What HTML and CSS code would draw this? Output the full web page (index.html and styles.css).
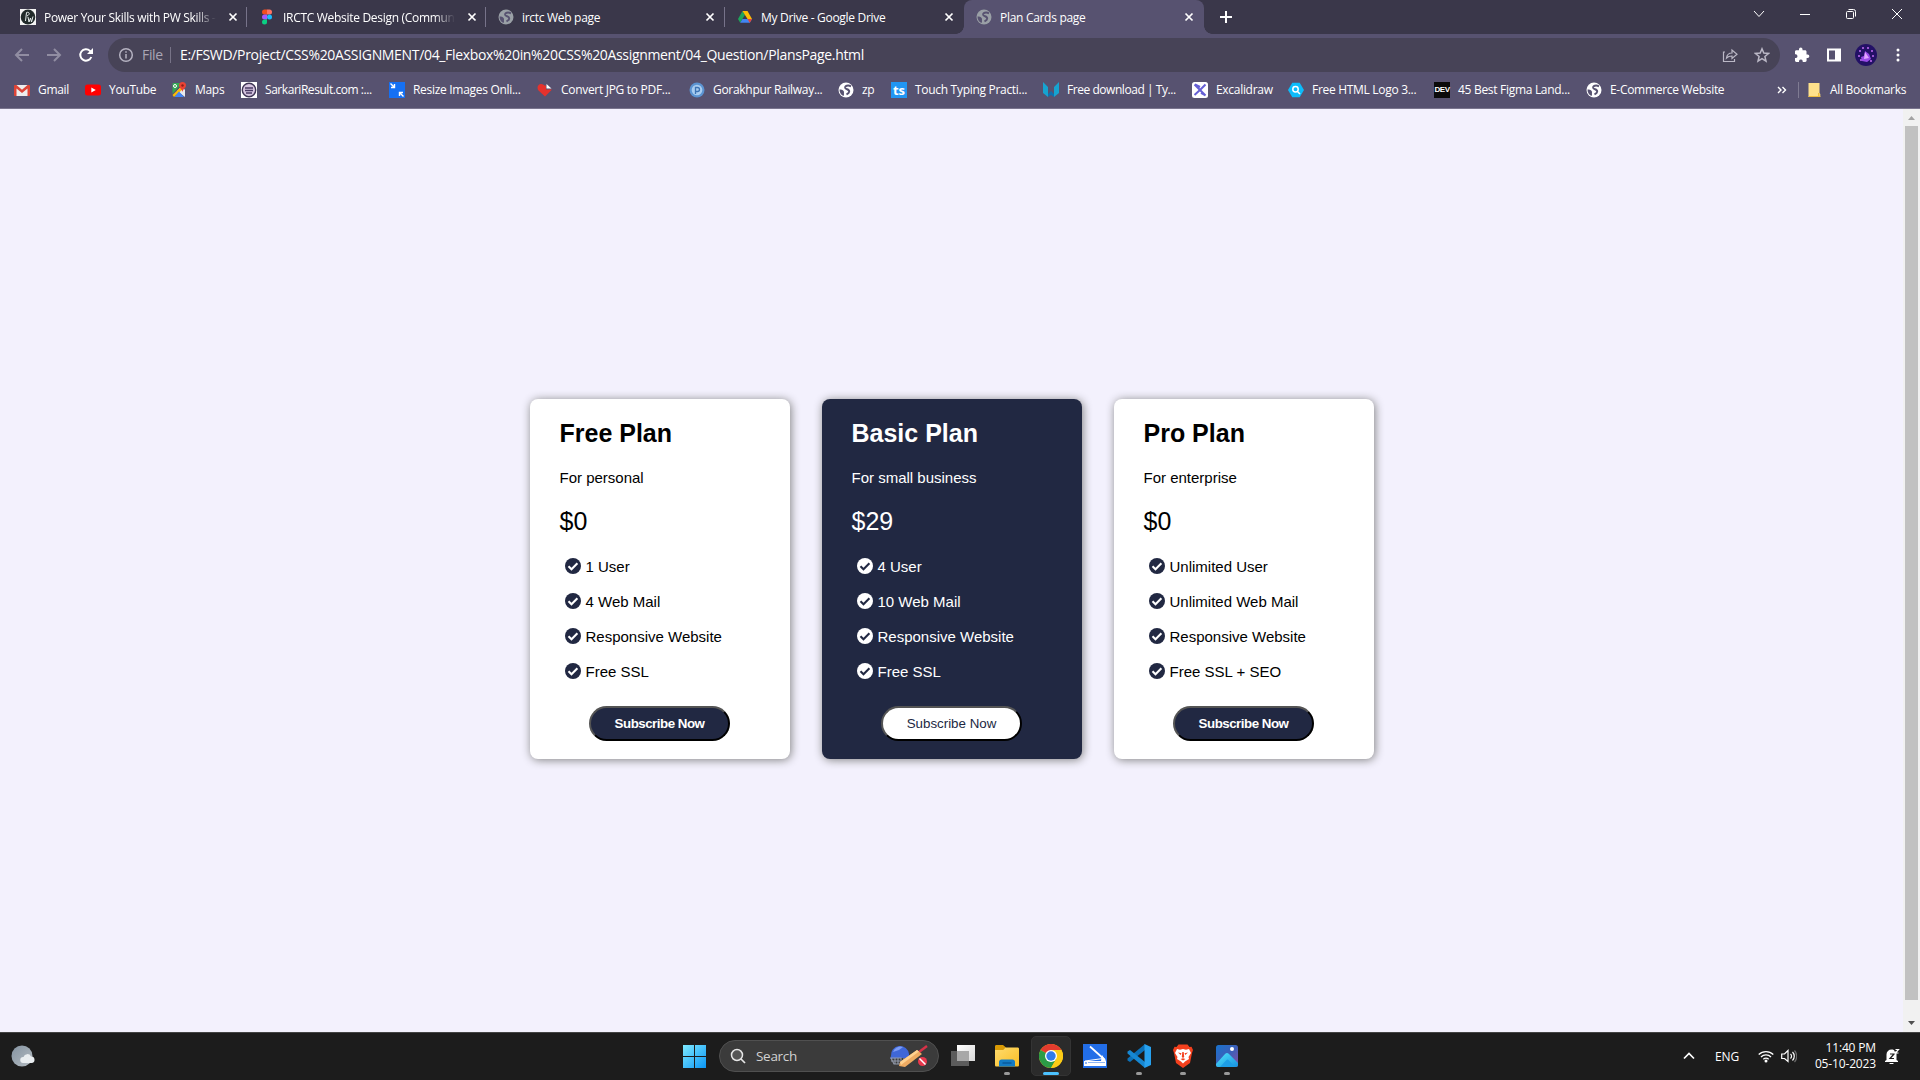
FILE: index.html
```html
<!DOCTYPE html>
<html lang="en">
<head>
<meta charset="utf-8">
<title>Plan Cards page</title>
<link rel="stylesheet" href="styles.css">
</head>
<body>
<svg width="0" height="0" class="defs">
  <symbol id="close" viewBox="0 0 16 16"><path d="M4.5 4.5l7 7M11.5 4.5l-7 7" stroke="#fff" stroke-width="1.7"/></symbol>
  <symbol id="globe" viewBox="0 0 16 16"><circle cx="8" cy="8" r="7.500" fill="currentColor"/><path d="M1.500 7.500C4 7 6.500 8.500 6 10.500c-.3 1.500.5 2-.5 3.500C3 13 1.500 10.500 1.500 7.500z" fill="#575270"/><path d="M13 4.300C10 2.800 6.500 3.800 7.200 6c.6 1.600 4.300 1 4 3.600-.2 1.700-1.700 2.400-2.700 2.900" fill="none" stroke="#575270" stroke-width="1.900"/></symbol>
  <symbol id="check" viewBox="0 0 16 16"><circle cx="8" cy="8" r="8" fill="currentColor"/><path d="M3.500 8.200l3 3 5.900-5.900" fill="none" stroke="var(--tick)" stroke-width="2.100"/></symbol>
</svg>

<header class="browser">
  <div class="tabstrip">
    <div class="tab">
      <svg class="ic" viewBox="0 0 16 16"><rect width="16" height="16" fill="#f4f4f4"/><ellipse cx="8" cy="8" rx="7.300" ry="7.600" fill="#222b2b"/><path d="M5.500 12L6.500 3.500c3-1 4 2 .5 3.500M8 8l1 5 1.500-4 1 4L13 7.500" fill="none" stroke="#e8eeee" stroke-width="1"/></svg>
      <span class="title fade">Power Your Skills with PW Skills -</span><svg class="ic"><use href="#close"/></svg>
    </div>
    <div class="tab">
      <svg class="ic" viewBox="0 0 16 16"><path d="M8 .5H5.500a2.500 2.500 0 000 5H8z" fill="#f24e1e"/><path d="M8 .5h2.500a2.500 2.500 0 010 5H8z" fill="#ff7262"/><path d="M8 5.500H5.500a2.500 2.500 0 000 5H8z" fill="#a259ff"/><circle cx="10.500" cy="8" r="2.500" fill="#1abcfe"/><path d="M8 10.500H5.500A2.500 2.500 0 108 13z" fill="#0acf83"/></svg>
      <span class="title fade">IRCTC Website Design (Commun</span><svg class="ic"><use href="#close"/></svg>
    </div>
    <div class="tab">
      <svg class="ic gray"><use href="#globe"/></svg>
      <span class="title">irctc Web page</span><svg class="ic"><use href="#close"/></svg>
    </div>
    <div class="tab last">
      <svg class="ic" viewBox="0 0 16 16"><path d="M5.500 2L1 10l2.200 3.800L8 5.800z" fill="#1ea55b"/><path d="M5.500 2h5L15 10h-4.500z" fill="#fbbc04"/><path d="M3.200 13.800L5.500 10H15l-2.200 3.800z" fill="#4285f4"/><path d="M12.800 13.800L10.500 10H15z" fill="#ea4335"/></svg>
      <span class="title">My Drive - Google Drive</span><svg class="ic"><use href="#close"/></svg>
    </div>
    <div class="tab active">
      <svg class="ic gray"><use href="#globe"/></svg>
      <span class="title">Plan Cards page</span><svg class="ic"><use href="#close"/></svg>
    </div>
    <svg class="plus" viewBox="0 0 16 16"><path d="M8 2v12M2 8h12" stroke="#fff" stroke-width="2"/></svg>
    <div class="winctl">
      <svg viewBox="0 0 12 12"><path d="M1 3l5 5.500L11 3"/></svg>
      <svg viewBox="0 0 12 12"><path d="M1 6.500h10"/></svg>
      <svg viewBox="0 0 12 12"><rect x="1.500" y="3.500" width="7" height="7" rx="1"/><path d="M3.500 1.500h5a2 2 0 012 2v5"/></svg>
      <svg viewBox="0 0 12 12"><path d="M1 1l10 10M11 1L1 11"/></svg>
    </div>
  </div>

  <div class="toolbar">
    <svg class="nav dim" viewBox="0 0 16 16"><path d="M15 8H2M8 2L2 8l6 6"/></svg>
    <svg class="nav dim" viewBox="0 0 16 16"><path d="M1 8h13M8 2l6 6-6 6"/></svg>
    <svg class="nav" viewBox="0 0 16 16"><path d="M13.300 10A5.700 5.700 0 1112 3.900L14 6"/><path d="M15 1v6H9z" fill="#fff" stroke="none"/></svg>
    <div class="omnibox">
      <svg class="info" viewBox="0 0 16 16"><circle cx="8" cy="8" r="6.300"/><path d="M8 7v4.500M8 4.200v1.600"/></svg>
      <span class="scheme">File</span>
      <span class="url">E:/FSWD/Project/CSS%20ASSIGNMENT/04_Flexbox%20in%20CSS%20Assignment/04_Question/PlansPage.html</span>
      <svg class="act" viewBox="0 0 16 16"><path d="M3 5H1.500v9.500h11V12M4.500 11C5 7.500 7 6 10 6V3l5 4.300-5 4.200V9C7.500 9 6 9.500 4.500 11z"/></svg>
      <svg class="act" viewBox="0 0 16 16"><path stroke-width="1.500" d="M8 1.800l1.800 4.300 4.700.4-3.600 3 1.100 4.600L8 11.700l-4 2.400 1.100-4.600-3.600-3 4.700-.4z"/></svg>
    </div>
    <svg class="tool" viewBox="0 0 16 16"><path fill="#fff" d="M13.500 7.500h-1V4.700c0-.8-.6-1.400-1.400-1.400H8.500v-1a1.700 1.700 0 00-3.500 0v1H2.400C1.600 3.300 1 3.900 1 4.700v2.600h1a1.900 1.900 0 010 3.700H1v2.600c0 .8.600 1.400 1.400 1.400H5v-1a1.900 1.900 0 013.700 0v1h2.500c.8 0 1.400-.6 1.400-1.400v-2.600h1a1.700 1.700 0 000-3.500z"/></svg>
    <svg class="tool" viewBox="0 0 16 16"><path fill="#fff" fill-rule="evenodd" d="M1 1.500h14v13H1zM3 3.500v9h6v-9z"/></svg>
    <svg class="avatar" viewBox="0 0 22 22"><circle cx="11" cy="11" r="11" fill="#231166"/><g fill="#c56cf5"><circle cx="5" cy="7" r="1"/><circle cx="8" cy="4" r="1"/><circle cx="13" cy="4" r="1"/><circle cx="17" cy="7" r="1"/><circle cx="4" cy="12" r="1"/><circle cx="18" cy="12" r="1"/><circle cx="6" cy="16" r="1"/><circle cx="16" cy="17" r="1"/></g><path d="M10 7l4 3 2 5-4 3-5-1-1-4 3-1z" fill="#9a4be8"/><path d="M10 8l4 6-5 1z" fill="#e3a5ff"/></svg>
    <svg class="tool" viewBox="0 0 16 16"><g fill="#fff"><circle cx="8" cy="3" r="1.500"/><circle cx="8" cy="8" r="1.500"/><circle cx="8" cy="13" r="1.500"/></g></svg>
  </div>

  <nav class="bookmarks">
    <a><svg class="ic" viewBox="0 0 16 16"><path fill="#eee" d="M1 3h14v11H1z"/><path fill="#de4437" d="M1 3h1.500L8 7.800 13.500 3H15c.5 0 1 .5 1 1v9c0 .6-.4 1-1 1h-1.500V6.500L8 11 2.500 6.500V14H1c-.6 0-1-.4-1-1V4c0-.5.500-1 1-1z"/></svg>Gmail</a>
    <a><svg class="ic" viewBox="0 0 16 16"><rect y="2.500" width="16" height="11" rx="2.500" fill="#f00"/><path d="M6.300 5.500L10.800 8l-4.500 2.500z" fill="#fff"/></svg>YouTube</a>
    <a><svg class="ic" viewBox="0 0 16 16"><path fill="#34a853" d="M2 1h9L1.500 12V2z"/><path fill="#e8eaed" d="M11 4l3 4v7L6 9z"/><path fill="#fbbc04" d="M1.500 13L11 4l1 3-9 8z"/><path fill="#4285f4" d="M3.500 15L8 9.500 13 15z"/><path fill="#ea4335" d="M11.500 0A3.500 3.500 0 008 3.500C8 6 11 7 11.500 10 12 7 15 6 15 3.500A3.500 3.500 0 0011.500 0z"/><circle cx="11.500" cy="3.500" r="1.200" fill="#8b1f17"/><circle cx="4" cy="4" r="1.500" fill="none" stroke="#fff"/></svg>Maps</a>
    <a class="tight"><svg class="ic" viewBox="0 0 16 16"><path fill="#fff" d="M0 0h16v16H0z"/><circle cx="8" cy="8" r="6.700" fill="#d5c4df" stroke="#3f3655" stroke-width="1.400"/><path d="M4 6h8M4 8.500h8M5 11h6" stroke="#493a64" stroke-width="1.300"/></svg>SarkariResult.com :...</a>
    <a><svg class="ic" viewBox="0 0 16 16"><path fill="#1570f3" d="M0 0h16v16H0z"/><path d="M1.500 1.500l4 4M5.500 2v3.500H2M14.500 14.500l-4-4M14 10.500h-3.500V14" fill="none" stroke="#fff" stroke-width="1.400"/></svg>Resize Images Onli...</a>
    <a><svg class="ic" viewBox="0 0 16 16"><path fill="#e5322d" d="M8 14.500L1.500 8.500C-.5 6 .8 2 4 2c2 0 3.300 1 4 2l1-1v4.500h6z"/><path fill="#fff" d="M9.500 2l5 4.500h-5z"/></svg>Convert JPG to PDF...</a>
    <a><svg class="ic" viewBox="0 0 16 16"><circle cx="8" cy="8" r="7.500" fill="#5b94d2"/><circle cx="8" cy="8" r="5.300" fill="#a9cdf0"/><path d="M6.500 12V5.500h2a2 2 0 010 4h-2" fill="none" stroke="#3d74b4" stroke-width="1.300"/></svg>Gorakhpur Railway...</a>
    <a><svg class="ic white"><use href="#globe"/></svg>zp</a>
    <a><span class="ic badge ts">ts</span>Touch Typing Practi...</a>
    <a class="tight"><svg class="ic" viewBox="0 0 16 16"><path fill="#16a3d0" d="M0 0l5 5v10L0 11zM16 0l-5 5v10l5-4z"/><path fill="#0f6fae" d="M5 12l3-3 3 3v3l-3-2-3 2z"/></svg>Free download | Ty...</a>
    <a><svg class="ic" viewBox="0 0 16 16"><rect width="16" height="16" rx="2.500" fill="#fff"/><path d="M2.500 2.500l11 11M13.500 2.500l-5 5-6 5.500M3 2.500L8 5M9 11l4.500 2.500" fill="none" stroke="#655fd5" stroke-width="2"/></svg>Excalidraw</a>
    <a><svg class="ic" viewBox="0 0 16 16"><path fill="#0cbcfb" d="M4.300.7h7.400L16 8l-4.300 7.300H4.300L0 8z"/><circle cx="7.500" cy="7.300" r="2.700" fill="none" stroke="#fff" stroke-width="1.500"/><path d="M9.500 9.500l2.500 2.500" stroke="#fff" stroke-width="1.500"/></svg>Free HTML Logo 3...</a>
    <a><span class="ic badge dev">DEV</span>45 Best Figma Land...</a>
    <a><svg class="ic white"><use href="#globe"/></svg>E-Commerce Website</a>
    <svg class="more" viewBox="0 0 10 10"><path d="M1 2l3 3-3 3M5.500 2l3 3-3 3" fill="none" stroke="#fff" stroke-width="1.400"/></svg>
    <a class="all"><svg class="ic" viewBox="0 0 16 16"><path fill="#ffe18b" d="M2.500 1h11v10l.8 1v3H2.500z"/><path fill="#efbd3f" d="M2.500 14h11.800v1H2.500zM12 11h1.500v3H12z"/></svg>All Bookmarks</a>
  </nav>
</header>

<div class="viewport">
  <main class="plans">
    <section class="card">
      <h1>Free Plan</h1>
      <p class="for">For personal</p>
      <p class="price">$0</p>
      <ul>
        <li><svg><use href="#check"/></svg>1 User</li>
        <li><svg><use href="#check"/></svg>4 Web Mail</li>
        <li><svg><use href="#check"/></svg>Responsive Website</li>
        <li><svg><use href="#check"/></svg>Free SSL</li>
      </ul>
      <button>Subscribe Now</button>
    </section>
    <section class="card basic">
      <h1>Basic Plan</h1>
      <p class="for">For small business</p>
      <p class="price">$29</p>
      <ul>
        <li><svg><use href="#check"/></svg>4 User</li>
        <li><svg><use href="#check"/></svg>10 Web Mail</li>
        <li><svg><use href="#check"/></svg>Responsive Website</li>
        <li><svg><use href="#check"/></svg>Free SSL</li>
      </ul>
      <button>Subscribe Now</button>
    </section>
    <section class="card">
      <h1>Pro Plan</h1>
      <p class="for">For enterprise</p>
      <p class="price">$0</p>
      <ul>
        <li><svg><use href="#check"/></svg>Unlimited User</li>
        <li><svg><use href="#check"/></svg>Unlimited Web Mail</li>
        <li><svg><use href="#check"/></svg>Responsive Website</li>
        <li><svg><use href="#check"/></svg>Free SSL + SEO</li>
      </ul>
      <button>Subscribe Now</button>
    </section>
  </main>
  <div class="scrollbar">
    <svg viewBox="0 0 17 17"><path d="M5 11h7L8.500 7z" fill="#a3a3a3"/></svg>
    <div class="thumb"></div>
    <svg viewBox="0 0 17 17"><path d="M5 6h7l-3.500 4z" fill="#505050"/></svg>
  </div>
</div>

<footer class="taskbar">
  <svg class="weather" viewBox="0 0 24 24"><defs><linearGradient id="moon" x2="1" y2="1"><stop stop-color="#8594a2"/><stop offset="1" stop-color="#b4bbc1"/></linearGradient></defs><circle cx="11" cy="12" r="10.500" fill="url(#moon)"/><path d="M12 19a3 3 0 01.5-6 4 4 0 017.500-.5 3.200 3.200 0 01.5 6.500z" fill="#e9edf0"/></svg>
  <div class="apps">
    <div class="slot start"><svg viewBox="0 0 23 23"><defs><linearGradient id="win" gradientUnits="userSpaceOnUse" x2="23" y2="23"><stop stop-color="#7eeaff"/><stop offset="1" stop-color="#0a95f5"/></linearGradient></defs><path fill="url(#win)" d="M0 0h11v11H0zM12 0h11v11H12zM0 12h11v11H0zM12 12h11v11H12z"/></svg></div>
    <div class="search">
      <svg class="lens" viewBox="0 0 16 16"><circle cx="7" cy="7" r="5.500" fill="#555" stroke="#e6e6e6" stroke-width="1.500"/><path d="M11 11l4 4" stroke="#e6e6e6" stroke-width="1.700"/></svg>
      <span>Search</span>
      <svg class="cricket" viewBox="0 0 40 24"><path d="M2 12a9 9 0 0118-2v4H8l-7 1z" fill="#3f67d8"/><path d="M4 8a8 8 0 0110-5l-4 3z" fill="#7c9cf5"/><path d="M2 14h10v6H5zM2 17h9M6 14v6M9 14v6M15 14v6" fill="none" stroke="#929aaa" stroke-width="1.100"/><path d="M30 8l8-6" stroke="#d83248" stroke-width="2.400"/><path d="M28 6l5 4-17 13-6-1 1-4z" fill="#efab62"/><path d="M28 6l2 1.500L12 21l-1-3z" fill="#ffd18f"/><circle cx="33.500" cy="17.500" r="4.500" fill="#e8384d"/><path d="M30.500 14.500l6 6" stroke="#fff" stroke-width="1.500"/></svg>
    </div>
    <div class="slot"><svg viewBox="0 0 24 24"><defs><linearGradient id="tv" x2="1" y2="1"><stop stop-color="#fff"/><stop offset="1" stop-color="#d8d8d8"/></linearGradient></defs><path fill="#5c5c5c" d="M0 7h18v15H0z"/><path fill="url(#tv)" d="M6 1h18v16H6z"/><path fill="#a8a8a8" d="M6 7h12v10H6z"/></svg></div>
    <div class="slot"><svg viewBox="0 0 24 24"><defs><linearGradient id="fold" x2="1" y2="1"><stop stop-color="#ffdc6e"/><stop offset="1" stop-color="#f9bd24"/></linearGradient></defs><path fill="#d99a05" d="M0 2.500C0 1.500.5 1 1.500 1H8l3 2.500-3 3H0z"/><path fill="url(#fold)" d="M0 6h8l2.500-2.500h12c1 0 1.500.5 1.500 1.500v16c0 1-.5 1.500-1.500 1.500h-21C.5 22.500 0 22 0 21z"/><path fill="#137bc4" d="M4 22.500V18c0-1.500 1-2.500 2.500-2.500h11c1.500 0 2.500 1 2.500 2.500v4.500z"/><path d="M7.500 19h9" stroke="#0a5a9c" stroke-width="1.500"/></svg><i></i></div>
    <div class="slot current"><svg viewBox="0 0 24 24"><circle cx="12" cy="12" r="12" fill="#fdcc16"/><path fill="#e33b2e" d="M12 12L1.600 6A12 12 0 0122.400 6z"/><path fill="#2c9c46" d="M12 12L1.600 6A12 12 0 0012 24l5.200-9z"/><path fill="#fdcc16" d="M12 6h10.400A12 12 0 0112 24l5.200-9z"/><circle cx="12" cy="12" r="6" fill="#fff"/><circle cx="12" cy="12" r="4.700" fill="#317be9"/></svg><i></i></div>
    <div class="slot"><svg viewBox="0 0 24 24"><path fill="#226ee8" d="M0 0h24v24H0z"/><path fill="#fff" d="M1 17h22v5H1z"/><path d="M7 2.500L22 16" stroke="#fff" stroke-width="1.700"/><path d="M2 17L20 14.500" stroke="#fff" stroke-width="1"/><path fill="#fff" d="M19 11l4 6h-5z"/><path fill="#226ee8" d="M2 18.500h2v1H2zM5 18.500h17v.6H5z"/></svg></div>
    <div class="slot"><svg viewBox="0 0 24 24"><path fill="#0b70b8" d="M18 0v6L3 18 .5 16.500v-2z"/><path fill="#1687d2" d="M18 24v-6L3 6 .5 7.500v2z"/><path fill="#27a1ef" d="M17.500 0L24 3v18l-6.500 3z"/></svg><i></i></div>
    <div class="slot"><svg viewBox="0 0 24 24"><path fill="#f4401d" d="M7.500.5h9L18.500 3l2-.3L22 6l-1 3-2 10-7 5-7-5L3 9 2 6l1.500-3.300 2 .3z"/><path fill="#fff" d="M6 5l3 .7L12 5l3 .7L18 5l2 4-2.500 4 .5 2-4 2.500-2 2-2-2L6 15l.5-2L4 9z"/><path fill="#f4401d" d="M7 8.500l3.500.7-.8 1.800zM17 8.500l-3.500.7.8 1.800zM11.300 8h1.400l.5 5-1.200 1-1.200-1zM9.500 15l2.500-.8 2.500.8-2.500 1.500z"/></svg><i></i></div>
    <div class="slot"><svg viewBox="0 0 24 24"><defs><linearGradient id="ph" x2="1" y2="1"><stop stop-color="#1873cd"/><stop offset=".5" stop-color="#3c5fb8"/><stop offset="1" stop-color="#8a4ea3"/></linearGradient><linearGradient id="hill" x2="1" y2="1"><stop stop-color="#52e5fb"/><stop offset="1" stop-color="#168fe0"/></linearGradient></defs><rect x="1" y="1" width="22" height="22" rx="2.500" fill="url(#ph)"/><path fill="url(#hill)" d="M1 20L10 10q2-1.800 4 0l9 9v2q0 2-2 2H3q-2 0-2-2z"/><path d="M5 23l6.500-7q1-1 2 0l6.500 7z" fill="#1d9de5"/><circle cx="17" cy="5" r="2" fill="#fff"/></svg><i></i></div>
  </div>
  <div class="tray">
    <svg viewBox="0 0 16 16"><path d="M3 10.500l5-5 5 5" stroke-width="1.700"/></svg>
    <span class="lang">ENG</span>
    <svg viewBox="0 0 16 16"><path d="M.7 6.500a10.500 10.500 0 0114.600 0M3 9a7 7 0 0110 0M5.300 11.300a4 4 0 015.400 0" stroke-width="1.300"/><circle cx="8" cy="13" r="1.500" fill="#fff" stroke="none"/></svg>
    <svg viewBox="0 0 16 16"><path d="M.7 6h2.800L7 2.500v11L3.500 10.500H.7zM9.500 6a3 3 0 010 4.500M11.500 4a6 6 0 010 8.500"/><path d="M13.500 2.500a8.500 8.500 0 010 11.500" opacity=".35"/></svg>
    <div class="clock"><span>11:40 PM</span><span>05-10-2023</span></div>
    <svg class="bell" viewBox="0 0 16 16"><path fill="#fff" stroke="none" d="M2.500 6.500A5 5 0 017.500 1.500c2 0 3 .5 3 2h2V12L14 13v1H1v-1l1.500-1zM5.500 15h4a2 2 0 01-4 0z"/><path d="M6 6h4l-4 4.500h4" stroke="#1d1d1d"/><path d="M11.500 1.500h3l-3 3.500h3"/></svg>
  </div>
</footer>
</body>
</html>
```

FILE: styles.css
```css
* { box-sizing: border-box; }
body {
  margin: 0;
  width: 1920px;
  height: 1080px;
  overflow: hidden;
  display: flex;
  flex-direction: column;
  font-family: "Open Sans", "Noto Sans", sans-serif;
  font-size: 12px;
  letter-spacing: -0.3px;
  color: #fff;
}
.defs { position: absolute; }
svg { display: block; flex: none; }
.ic { width: 16px; height: 16px; flex: none; }
.gray { color: #9aa0a6; }
.white { color: #fff; }

/* Browser chrome */
.browser { height: 109px; background: #575270; border-bottom: 1px solid #7a758e; flex: none; }
.tabstrip { height: 34px; background: #3a374a; display: flex; align-items: center; padding-left: 8px; }
.tab { width: 239px; height: 34px; padding: 0 15px 0 12px; display: flex; align-items: center; position: relative; }
.tab .title { flex: 1; margin: 0 9px 0 8px; white-space: nowrap; }
.tab .ic:last-child { margin-right: -8px; }
.tab:not(.last):not(.active)::after { content: ""; position: absolute; right: 0; top: 7px; width: 1px; height: 20px; background: #77738a; }
.fade { -webkit-mask-image: linear-gradient(90deg, #000 88%, transparent); mask-image: linear-gradient(90deg, #000 88%, transparent); }
.active { background: #575270; border-radius: 8px 8px 0 0; width: 240px; }
.active::before, .active::after { content: ""; position: absolute; bottom: 0; width: 8px; height: 8px; }
.active::before { left: -8px; background: radial-gradient(circle at 0 0, transparent 7.5px, #575270 8px); }
.tab.active::after { right: -8px; background: radial-gradient(circle at 100% 0, transparent 7.5px, #575270 8px); }
.active .title { margin-right: 10px; }
.plus { width: 16px; height: 16px; margin-left: 14px; }
.winctl { margin: 0 17px 6px auto; display: flex; gap: 34px; }
.winctl svg { width: 12px; height: 12px; fill: none; stroke: #fff; }

.toolbar { height: 42px; padding: 0 14px; display: flex; align-items: center; gap: 16px; }
.nav { width: 16px; height: 16px; fill: none; stroke: #fff; stroke-width: 2; }
.dim { stroke: #918da2; }
.omnibox { width: 1672px; height: 34px; margin-left: -2px; padding: 0 10px; border-radius: 17px; background: #474357; display: flex; align-items: center; font-size: 14px; letter-spacing: -0.33px; }
.info { width: 16px; height: 16px; fill: none; stroke: #b5b2c1; stroke-width: 1.5; }
.scheme { color: #aaa7b5; margin-left: 8px; width: 29px; border-right: 1px solid #777387; line-height: 16px; }
.url { margin-left: 9px; flex: 1; white-space: nowrap; line-height: 16px; }
.act { width: 16px; height: 16px; margin-left: 16px; fill: none; stroke: #bbb8c6; stroke-width: 1.2; }
.omnibox + .tool { margin-left: -2px; }
.tool { width: 16px; height: 16px; }
.avatar { width: 22px; height: 22px; margin: 0 -3px; }

.bookmarks {
  height: 28px;
  padding-left: 14px;
  display: grid;
  grid-template-columns: 71px 86px 70px 148px 148px 152px 149px 53px 152px 149px 96px 146px 152px 192px 20px 110px;
  align-items: center;
}
.bookmarks a { display: flex; align-items: center; gap: 8px; white-space: nowrap; line-height: 16px; padding-bottom: 1px; }
.bookmarks a .ic { margin-bottom: -1px; }
.bookmarks .tight { letter-spacing: -0.45px; }
.bookmarks .all { border-left: 1px solid #7f7b92; padding-left: 7px; height: 16px; }
.more { width: 10px; height: 10px; margin-left: -1px; }
.badge { display: flex; align-items: center; justify-content: center; color: #fff; font-weight: 700; letter-spacing: 0; line-height: 16px; }
.ts { background: #2196f3; font-size: 13px; }
.dev { background: #0b0b0b; font-family: "Liberation Sans", sans-serif; font-size: 8px; letter-spacing: -0.4px; }

/* Page */
.viewport { height: 923px; display: flex; background: #f3f1fd; flex: none; }
.plans { flex: 1; padding-top: 290px; display: flex; justify-content: center; align-items: flex-start; gap: 32px; font-family: "Liberation Sans", Arial, sans-serif; font-size: 15px; letter-spacing: 0; color: #000; }
.card { --tick: #fff; width: 260px; height: 360px; padding: 20px 30px 0; border-radius: 8px; background: #fff; box-shadow: 1px 1px 10px gray; }
.card svg { color: #212842; }
.card h1 { margin: 0; font-size: 25px; line-height: 29px; }
.for { margin: 21px 0 0; line-height: 17px; }
.price { margin: 21px 0 0; font-size: 25px; line-height: 29px; }
.card ul { list-style: none; margin: 13px 0 0; padding: 0 0 0 5px; }
.card li { height: 35px; display: flex; align-items: center; gap: 5px; }
.card li svg { width: 16px; height: 16px; margin-top: -1px; }
.card button { display: block; width: 141px; height: 35px; margin: 17px auto 0; padding: 0; border: 2px outset #000; border-radius: 18px; background: #212842; color: #fff; font: 700 13.333px "Liberation Sans", Arial, sans-serif; letter-spacing: -0.5px; }
.basic { --tick: #212842; background: #212842; color: #fff; }
.basic svg { color: #fff; }
.basic button { background: #fff; color: #212842; font-weight: 400; letter-spacing: 0; }

.scrollbar { width: 17px; background: #f1f1f1; display: flex; flex-direction: column; }
.scrollbar svg { width: 17px; height: 17px; }
.thumb { flex: none; width: 13px; height: 874px; margin: 0 2px auto; background: #c1c1c1; }

/* Taskbar */
.taskbar { height: 48px; background: #1c1c1c; border-top: 1px solid #434343; display: flex; align-items: center; padding-bottom: 1px; }
.weather { width: 24px; height: 24px; margin-left: 11px; }
.apps { margin-left: 637px; display: flex; align-items: center; height: 46px; }
.slot { width: 44px; height: 40px; display: flex; align-items: center; justify-content: center; position: relative; }
.slot svg { width: 24px; height: 24px; }
.start svg { width: 23px; height: 23px; }
.start { width: 47px; padding-right: 3px; }
.slot i { position: absolute; left: 19px; bottom: 1px; width: 6px; height: 3px; border-radius: 2px; background: #999; }
.current { width: 40px; margin: 0 2px; background: #2b2b2b; border: 1px solid #343434; border-radius: 5px; }
.current i { left: 11px; bottom: 0; width: 16px; background: #4cc2ff; }
.search { width: 220px; height: 32px; margin-right: 2px; padding: 0 11px 0 10px; border: 1px solid #505050; border-radius: 16px; background: #3b3b3b; display: flex; align-items: center; color: #d2d2d2; font-size: 13.5px; }
.lens { width: 16px; height: 16px; }
.search span { margin-left: 10px; flex: 1; }
.cricket { width: 40px; height: 24px; margin-right: -2px; }
.tray { margin-left: auto; padding-right: 20px; display: flex; align-items: center; }
.tray svg { width: 16px; height: 16px; fill: none; stroke: #fff; stroke-width: 1.2; }
.lang { margin: 0 18px; width: 25px; letter-spacing: -0.1px; }
.tray .lang + svg { margin-right: 7px; }
.clock { margin-left: 16px; width: 63px; display: flex; flex-direction: column; align-items: flex-end; line-height: 16px; white-space: nowrap; letter-spacing: -0.15px; }
.tray .bell { margin-left: 8px; }
```
